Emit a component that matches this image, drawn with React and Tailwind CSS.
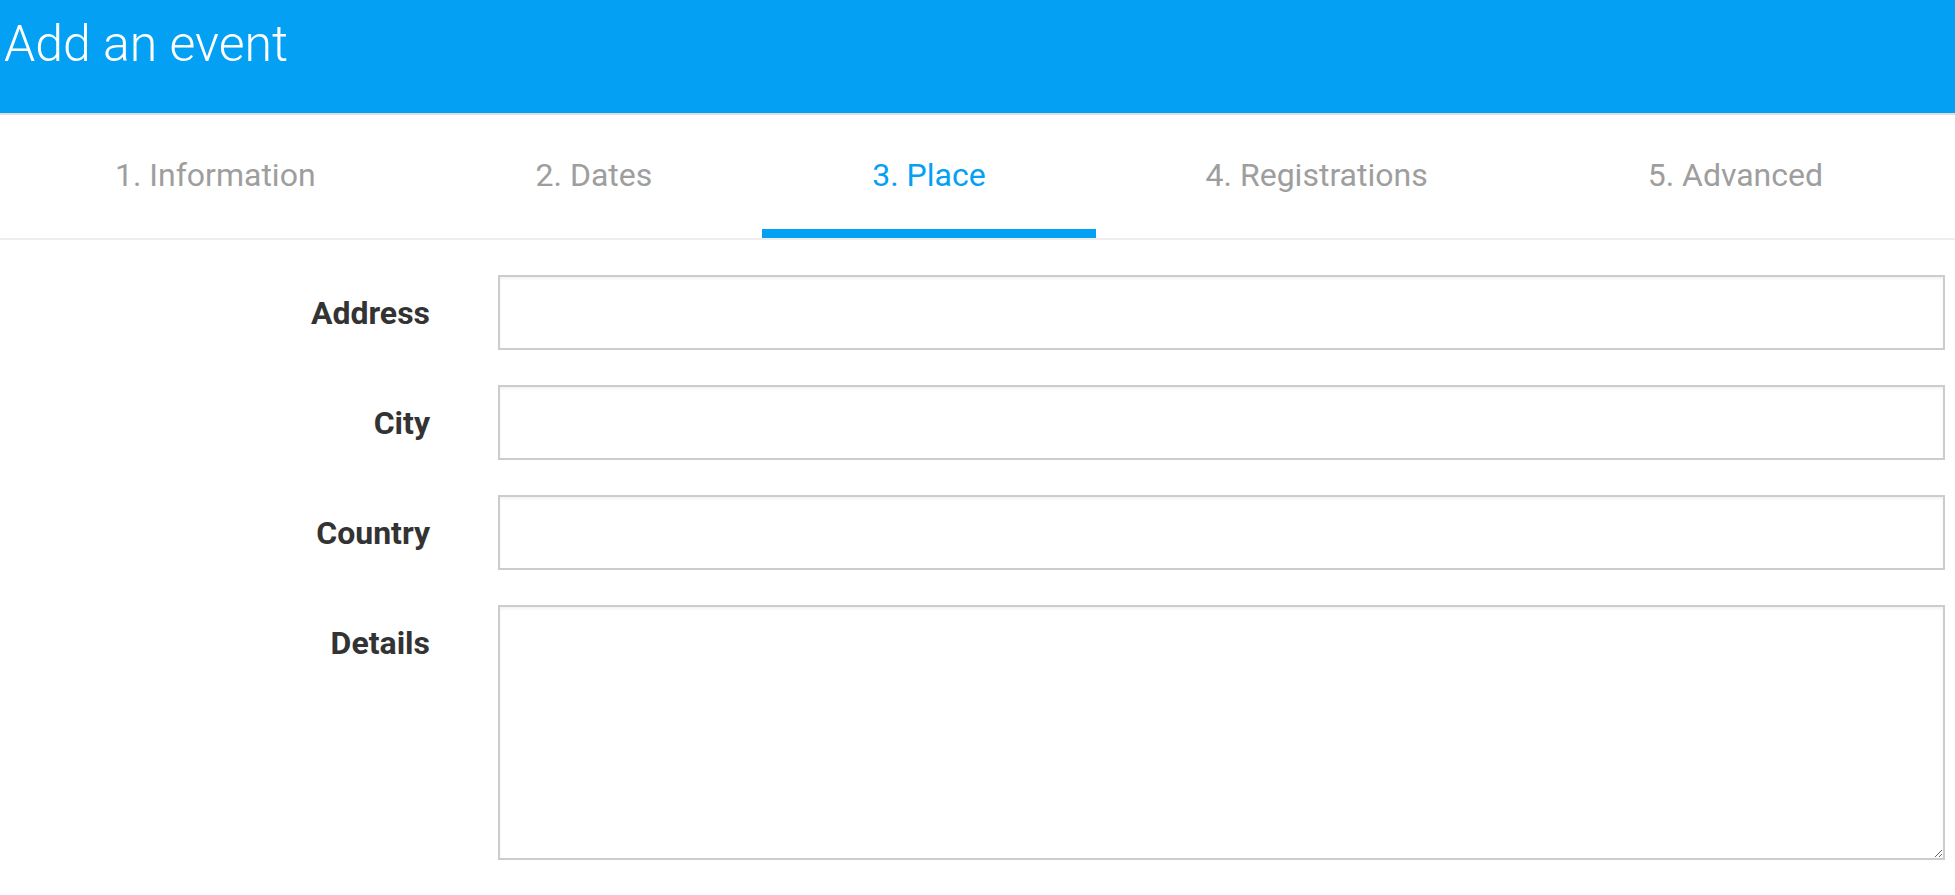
import React from "react";

const tabs = ["1. Information", "2. Dates", "3. Place", "4. Registrations", "5. Advanced"];
const fields = ["Address", "City", "Country"];

export default function App() {
  const active = 2;

  return (
    <div className="min-h-screen bg-white font-['Roboto',sans-serif]">
      <div className="h-[113px] bg-[#03a0f4] pl-[4px] pt-[19px]">
        <h1 className="text-[50px] font-light leading-none text-white">Add an event</h1>
      </div>

      <div className="flex border-t-2 border-b-2 border-t-[#e0e0e0] border-b-[#eeeeee] pl-[5px] pr-[22px]">
        {tabs.map((tab, i) => (
          <div
            key={tab}
            className={`flex-auto h-[123px] pt-[44px] text-center text-[32px] leading-none border-b-[9px] ${
              i === active ? "border-[#03a0f4] text-[#03a0f4]" : "border-transparent text-[#9e9e9e]"
            }`}
          >
            {tab}
          </div>
        ))}
      </div>

      <form className="flex flex-col gap-[35px] pt-[35px] pr-[10px]">
        {fields.map((name) => (
          <div key={name} className="flex gap-[68px]">
            <label className="w-[430px] h-[75px] flex items-center justify-end text-[32px] font-bold text-[#333]">
              {name}
            </label>
            <input
              type="text"
              className="flex-1 h-[75px] border-2 border-[#cccccc] shadow-[inset_0_2px_3px_rgba(0,0,0,0.05)] outline-none px-3 text-[28px]"
            />
          </div>
        ))}
        <div className="flex gap-[68px]">
          <label className="w-[430px] h-[75px] flex items-center justify-end text-[32px] font-bold text-[#333]">
            Details
          </label>
          <textarea className="flex-1 h-[255px] border-2 border-[#cccccc] shadow-[inset_0_2px_3px_rgba(0,0,0,0.05)] outline-none p-3 text-[28px]" />
        </div>
      </form>
    </div>
  );
}
